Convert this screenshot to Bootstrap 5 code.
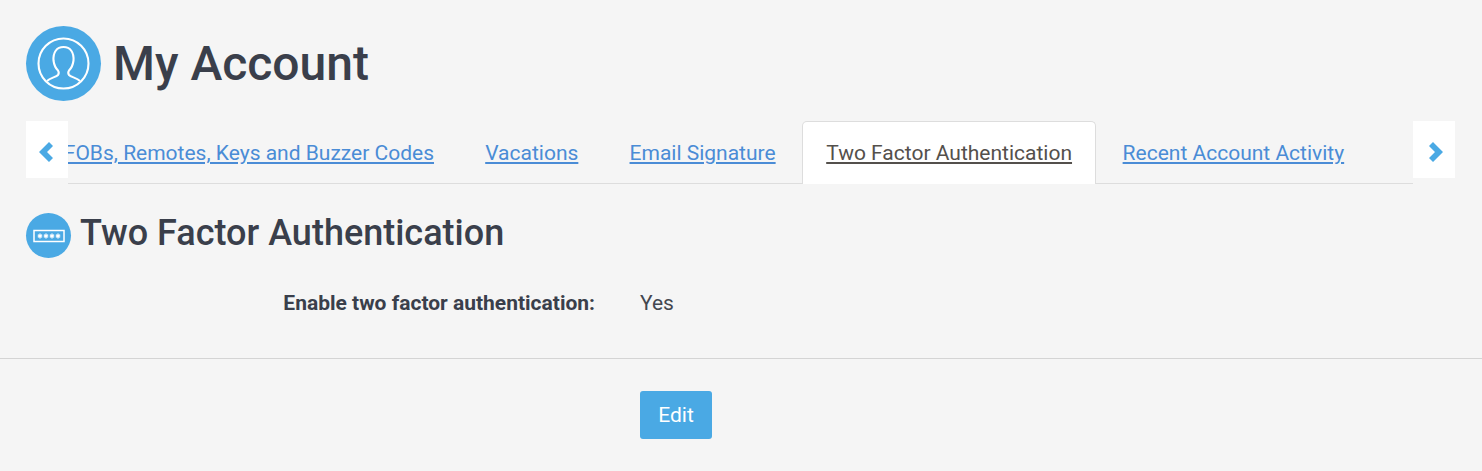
<!DOCTYPE html>
<html lang="en">
<head>
    <meta charset="UTF-8">
    <title>My Account</title>
    <link rel="stylesheet" href="https://cdn.jsdelivr.net/npm/bootstrap@5.3.0/dist/css/bootstrap.min.css">
    <style>
        body { background: #f5f5f5; font-family: Roboto, "Liberation Sans", sans-serif; font-size: 21px; color: #3a3f4b; }
        .page-head { padding: 26px 27px 20px 26px; gap: 12px; }
        .round-icon { background: #4aa9e4; border-radius: 50%; flex: none; display: flex; align-items: center; justify-content: center; }
        .round-lg { width: 75px; height: 75px; }
        .round-sm { width: 45px; height: 45px; }
        .page-title { font-size: 48px; font-weight: 500; line-height: 75px; margin: 0; color: #3a3f4b; }
        .tab-wrap { padding: 0 27px 0 26px; height: 63px; }
        .tab-arrow { width: 42px; height: 57px; padding-top: 4px; background: #fff; flex: none; display: flex; align-items: center; justify-content: center; }
        .tab-next { padding-left: 2px; }
        .tab-strip { flex: 1; min-width: 0; overflow: hidden; height: 63px; }
        .tab-list { margin-left: -5.2px; flex-wrap: nowrap; white-space: nowrap; height: 63px; border-bottom: 1px solid #ddd; }
        .tab-list .nav-link { font-size: 21px; line-height: 28px; padding: 17px 24.6px; border: 1px solid transparent; border-bottom: 0; border-radius: 5px 5px 0 0; color: #4a8cd6; text-decoration: underline; background: none; height: 63px; }
        .tab-list .nav-item:first-child .nav-link { padding-left: 0; }
        .tab-list .nav-link.active { margin: 0 .6px; padding: 17px 23.4px; background: #fff; border-color: #ddd; color: #54504c; }
        .section-head { padding: 29px 26px 0; gap: 9px; }
        .section-title { font-size: 36px; font-weight: 500; line-height: 41px; margin: 0 0 4px; color: #3a3f4b; }
        .field-row { margin-top: 31px; font-size: 21px; line-height: 28px; }
        .field-label { width: 595px; text-align: right; font-weight: 700; margin-right: 45px; color: #3a3f4b; }
        .field-value { color: #44474f; }
        .rule { margin: 41px 0 32px; border: 0; border-top: 1px solid #d4d4d4; opacity: 1; }
        .form-actions { padding-left: 640px; }
        .btn-edit { background: #4aa9e4; border: 0; color: #fff; font-size: 21px; line-height: 28px; width: 72px; height: 48px; padding: 10px 0; border-radius: 3px; }
    </style>
</head>
<body>
<div class="d-flex align-items-center page-head">
    <span class="round-icon round-lg">
        <svg width="53" height="53" viewBox="0 0 53 53" fill="none" stroke="#fff" stroke-width="2.100">
            <circle cx="26.500" cy="26.500" r="25"/>
            <path d="M10 44c3-3 9-4 11-6 1-1.500 1-3 0-4.500-2.500-2.500-4-6-4.500-10-.5-8 3-13.500 10-13.500s10.500 5.500 10 13.500c-.5 4-2 7.500-4.500 10-1 1.500-1 3 0 4.500 2 2 8 3 11 6"/>
        </svg>
    </span>
    <h1 class="page-title">My Account</h1>
</div>
<div class="d-flex tab-wrap">
    <a class="tab-arrow" href="#">
        <svg width="18" height="22" viewBox="0 0 18 22"><path d="M11 1l4 4-6 6 6 6-4 4L1 11z" fill="#4aa9e4"/></svg>
    </a>
    <div class="tab-strip">
        <ul class="nav tab-list">
            <li class="nav-item"><a class="nav-link" href="#">FOBs, Remotes, Keys and Buzzer Codes</a></li>
            <li class="nav-item"><a class="nav-link" href="#">Vacations</a></li>
            <li class="nav-item"><a class="nav-link" href="#">Email Signature</a></li>
            <li class="nav-item"><a class="nav-link active" href="#">Two Factor Authentication</a></li>
            <li class="nav-item"><a class="nav-link" href="#">Recent Account Activity</a></li>
        </ul>
    </div>
    <a class="tab-arrow tab-next" href="#">
        <svg width="18" height="22" viewBox="0 0 18 22"><path d="M7 1L3 5l6 6-6 6 4 4 10-10z" fill="#4aa9e4"/></svg>
    </a>
</div>
<div class="d-flex align-items-center section-head">
    <span class="round-icon round-sm">
        <svg width="32" height="14" viewBox="0 0 32 14">
            <rect x="1" y="1.500" width="30" height="11" fill="none" stroke="#fff" stroke-width="1.500"/>
            <g stroke="#fff" stroke-width="1.300">
                <path d="M7 4.500v5M4.800 5.700l4.400 2.600M9.200 5.700L4.800 8.300"/>
                <path d="M13 4.500v5M10.800 5.700l4.400 2.600M15.200 5.700l-4.400 2.600"/>
                <path d="M19 4.500v5M16.800 5.700l4.400 2.600M21.200 5.700l-4.400 2.600"/>
                <path d="M25 4.500v5M22.800 5.700l4.400 2.600M27.200 5.700l-4.400 2.600"/>
            </g>
        </svg>
    </span>
    <h2 class="section-title">Two Factor Authentication</h2>
</div>
<div class="d-flex field-row">
    <div class="field-label">Enable two factor authentication:</div>
    <div class="field-value">Yes</div>
</div>
<hr class="rule">
<div class="form-actions">
    <button type="button" class="btn btn-edit">Edit</button>
</div>
<script src="https://cdn.jsdelivr.net/npm/bootstrap@5.3.0/dist/js/bootstrap.bundle.min.js"></script>
</body>
</html>
